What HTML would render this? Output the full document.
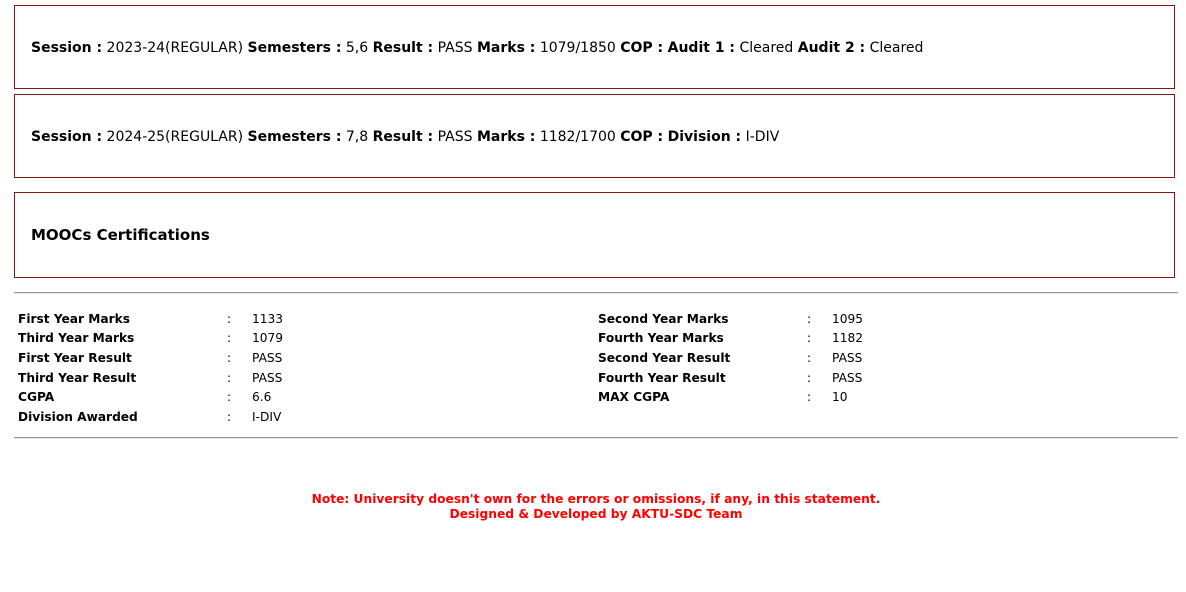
<!DOCTYPE html>
<html><head><style>
body{margin:0;background:#fff;font-family:"DejaVu Sans","Liberation Sans",sans-serif;color:#000;width:1186px;height:592px;overflow:hidden;position:relative}
.box{position:absolute;left:14px;width:1161px;border:1px solid #7f1a0f;box-sizing:border-box}
.box p{margin:0;position:absolute;left:16px;font-size:14px;white-space:nowrap}
.hr{position:absolute;left:14px;width:1164px;height:1px;background:#999;border-bottom:1px solid #e4e4e4}
.r{position:absolute;font-size:12.2px;white-space:nowrap;line-height:15px}
b{font-weight:bold}
.note{position:absolute;left:0;width:1192px;text-align:center;color:#f00;font-weight:bold;font-size:12.25px;line-height:15px}
</style></head><body>
<div class="box" style="top:5px;height:84px"><p style="top:34px"><b>Session :</b> 2023-24(REGULAR) <b>Semesters :</b> 5,6 <b>Result :</b> PASS <b>Marks :</b> 1079/1850 <b>COP :</b> <b>Audit 1 :</b> Cleared <b>Audit 2 :</b> Cleared</p></div>
<div class="box" style="top:94px;height:84px"><p style="top:34px"><b>Session :</b> 2024-25(REGULAR) <b>Semesters :</b> 7,8 <b>Result :</b> PASS <b>Marks :</b> 1182/1700 <b>COP :</b> <b>Division :</b> I-DIV</p></div>
<div class="box" style="top:192px;height:86px"><p style="top:33px;font-weight:bold;font-size:15px">MOOCs Certifications</p></div>
<div class="hr" style="top:292px"></div>
<div class="r" style="left:18px;top:312px"><b>First Year Marks</b></div><div class="r" style="left:227px;top:312px">:</div><div class="r" style="left:252px;top:312px">1133</div>
<div class="r" style="left:18px;top:331px"><b>Third Year Marks</b></div><div class="r" style="left:227px;top:331px">:</div><div class="r" style="left:252px;top:331px">1079</div>
<div class="r" style="left:18px;top:351px"><b>First Year Result</b></div><div class="r" style="left:227px;top:351px">:</div><div class="r" style="left:252px;top:351px">PASS</div>
<div class="r" style="left:18px;top:371px"><b>Third Year Result</b></div><div class="r" style="left:227px;top:371px">:</div><div class="r" style="left:252px;top:371px">PASS</div>
<div class="r" style="left:18px;top:390px"><b>CGPA</b></div><div class="r" style="left:227px;top:390px">:</div><div class="r" style="left:252px;top:390px">6.6</div>
<div class="r" style="left:18px;top:410px"><b>Division Awarded</b></div><div class="r" style="left:227px;top:410px">:</div><div class="r" style="left:252px;top:410px">I-DIV</div>
<div class="r" style="left:598px;top:312px"><b>Second Year Marks</b></div><div class="r" style="left:807px;top:312px">:</div><div class="r" style="left:832px;top:312px">1095</div>
<div class="r" style="left:598px;top:331px"><b>Fourth Year Marks</b></div><div class="r" style="left:807px;top:331px">:</div><div class="r" style="left:832px;top:331px">1182</div>
<div class="r" style="left:598px;top:351px"><b>Second Year Result</b></div><div class="r" style="left:807px;top:351px">:</div><div class="r" style="left:832px;top:351px">PASS</div>
<div class="r" style="left:598px;top:371px"><b>Fourth Year Result</b></div><div class="r" style="left:807px;top:371px">:</div><div class="r" style="left:832px;top:371px">PASS</div>
<div class="r" style="left:598px;top:390px"><b>MAX CGPA</b></div><div class="r" style="left:807px;top:390px">:</div><div class="r" style="left:832px;top:390px">10</div>
<div class="hr" style="top:437px"></div>
<div class="note" style="top:492px">Note: University doesn't own for the errors or omissions, if any, in this statement.</div>
<div class="note" style="top:507px">Designed &amp; Developed by AKTU-SDC Team</div>
</body></html>
